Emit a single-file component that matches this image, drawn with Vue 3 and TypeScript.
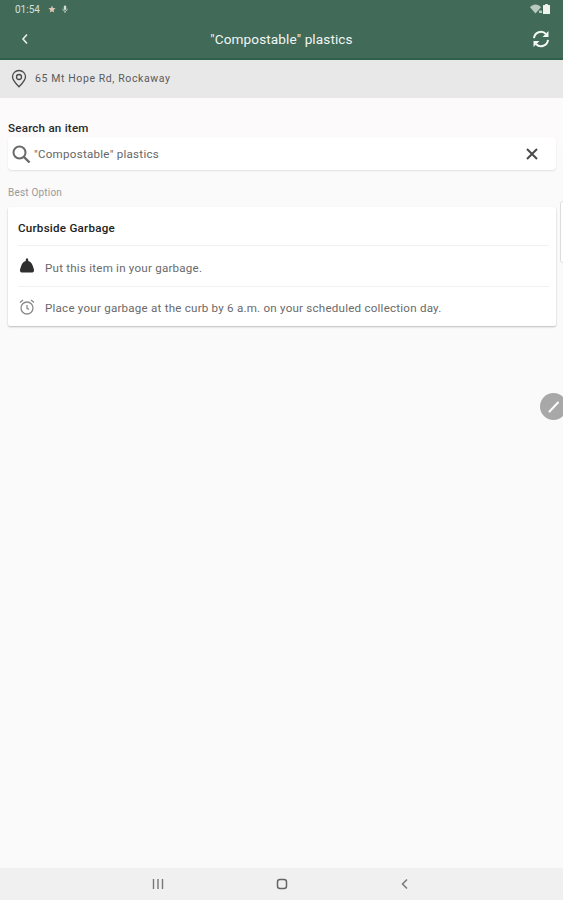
<script setup lang="ts">
const title = '"Compostable" plastics'
</script>

<template>
  <div class="page">
    <header class="appbar">
      <div class="status">
        <div class="status-left">
          <span class="time">01:54</span>
          <svg width="8" height="8" viewBox="0 0 8 8"><path d="M4 .5 5 3l2.600.3L5.600 5l.6 2.600L4 6.200 1.800 7.600 2.400 5 .4 3.300 3 3z" fill="#e0c8b4" /></svg>
          <svg width="6" height="8" viewBox="0 0 6 8"><rect x="1.800" y=".5" width="2.400" height="4.500" rx="1.200" fill="#d5e0da" /><path d="M.8 3.800C.8 7 5.200 7 5.200 3.800M3 6v2" fill="none" stroke="#d5e0da" stroke-width=".8" /></svg>
        </div>
        <div class="status-right">
          <svg width="12" height="10" viewBox="0 0 12 10"><path d="M0 3.200C3-.4 8-.4 11 3.200L5.500 9.500z" fill="#b9c9c1" /><path d="M9 6.500h3V9H9z" fill="#b9c9c1" /></svg>
          <svg width="7" height="10" viewBox="0 0 7 10"><path d="M2.200 0h2.600v1H6.500a.5.5 0 0 1 .5.500V10H0V1.500A.5.5 0 0 1 .5 1h1.700z" fill="#eef3f0" /></svg>
        </div>
      </div>
      <div class="toolbar">
        <svg class="back" width="8" height="12" viewBox="0 0 8 12"><path d="M6 1.500 2 6l4 4.500" fill="none" stroke="#e8efeb" stroke-width="1.600" /></svg>
        <h1 class="title">{{ title }}</h1>
        <svg class="refresh" width="18" height="18" viewBox="0 0 18 18">
          <path d="M2 8.200A7 7 0 0 1 14 4" fill="none" stroke="#f2f6f4" stroke-width="2" />
          <path d="M16 9.800A7 7 0 0 1 4 14" fill="none" stroke="#f2f6f4" stroke-width="2" />
          <path d="M16.500 1v6h-6zM1.500 17v-6h6z" fill="#f2f6f4" />
        </svg>
      </div>
    </header>

    <div class="address">
      <svg width="16" height="20" viewBox="0 0 16 20"><path d="M8 1.500c3.800 0 6.500 2.800 6.500 6.300 0 3.600-3.200 6.600-6.500 10-3.300-3.400-6.500-6.400-6.500-10C1.500 4.300 4.200 1.500 8 1.500z" fill="none" stroke="#4a4a4a" stroke-width="1.300" /><circle cx="8" cy="8" r="2.500" fill="none" stroke="#4a4a4a" stroke-width="1.300" /></svg>
      <span>65 Mt Hope Rd, Rockaway</span>
    </div>

    <main class="content">
      <div class="search-label">Search an item</div>
      <div class="search">
        <svg width="20" height="20" viewBox="0 0 20 20"><circle cx="8.500" cy="8.500" r="6" fill="none" stroke="#6a6a6a" stroke-width="2" /><path d="m13 13 5.500 5.500" stroke="#6a6a6a" stroke-width="2.400" /></svg>
        <span class="search-text">{{ title }}</span>
        <svg class="clear" width="14" height="14" viewBox="0 0 14 14"><path d="m2 2 10 10M12 2 2 12" stroke="#4a4a4a" stroke-width="2" /></svg>
      </div>

      <div class="best">Best Option</div>
      <section class="card">
        <div class="card-title">Curbside Garbage</div>
        <div class="row">
          <svg class="row-icon" width="18" height="18" viewBox="0 0 18 18"><path d="M8 1.500h2l.3 2.500c2.500.6 4 3 4.700 5.500.5 1.800 1 2.500 1 4 0 1.500-1 2-2.500 2h-9C3 15.500 2 15 2 13.500c0-1.500.5-2.200 1-4C3.700 7 5.200 4.600 7.700 4z" fill="#2f2f2f" /></svg>
          <span>Put this item in your garbage.</span>
        </div>
        <div class="row">
          <svg class="row-icon" width="18" height="18" viewBox="0 0 18 18"><circle cx="9" cy="10" r="6" fill="none" stroke="#8a8a8a" stroke-width="1.300" /><path d="M9 7v3.300l2 1M2 4.500 5 2M16 4.500 13 2" fill="none" stroke="#8a8a8a" stroke-width="1.300" /></svg>
          <span>Place your garbage at the curb by 6 a.m. on your scheduled collection day.</span>
        </div>
      </section>

      <div class="side-tab"></div>
      <div class="fab">
        <svg width="14" height="14" viewBox="0 0 14 14"><path d="m2.500 11.500 8.500-9" stroke="#fff" stroke-width="2" stroke-linecap="round" /></svg>
      </div>
    </main>

    <nav class="navbar">
      <svg width="12" height="12" viewBox="0 0 12 12"><path d="M1.500 1v10M6 1v10M10.500 1v10" stroke="#777" stroke-width="1.400" /></svg>
      <svg width="12" height="12" viewBox="0 0 12 12"><rect x="1.500" y="1.500" width="9" height="9" rx="2.500" fill="none" stroke="#666" stroke-width="1.500" /></svg>
      <svg width="12" height="12" viewBox="0 0 12 12"><path d="M8 1.500 3.500 6 8 10.500" fill="none" stroke="#777" stroke-width="1.500" /></svg>
    </nav>
  </div>
</template>

<style>
body {
  margin: 0;
}
</style>

<style scoped>
.page {
  width: 563px;
  height: 900px;
  display: flex;
  flex-direction: column;
  overflow: hidden;
  background: #fafafa;
  font-family: Roboto, "Liberation Sans", sans-serif;
  color: #555;
}

.appbar {
  height: 60px;
  box-sizing: border-box;
  background: #416a58;
  border-bottom: 2px solid #2f6049;
  flex-shrink: 0;
}

.status {
  height: 18px;
  padding: 0 13px 0 15px;
  display: flex;
  align-items: center;
  justify-content: space-between;
}

.status-left,
.status-right {
  display: flex;
  align-items: center;
  gap: 6px;
}

.status-right {
  gap: 1px;
}

.time {
  font-size: 10px;
  color: #d5e0da;
  margin-right: 2px;
}

.toolbar {
  height: 40px;
  padding: 1px 13px 0;
  box-sizing: border-box;
  display: grid;
  grid-template-columns: 1fr auto 1fr;
  align-items: center;
}

.back {
  margin-left: 8px;
}

.refresh {
  justify-self: end;
}

.title {
  margin: 0;
  text-align: center;
  font-size: 13.6px;
  font-weight: 400;
  color: #f2f6f4;
  letter-spacing: 0.1px;
}

.address {
  height: 38px;
  flex-shrink: 0;
  box-sizing: border-box;
  padding: 0 0 1px 11px;
  display: flex;
  align-items: center;
  gap: 8px;
  background: #e8e8e8;
  font-size: 10.5px;
  color: #5a5a5a;
  letter-spacing: 0.6px;
}

.content {
  flex: 1;
  position: relative;
  padding: 0 7px 0 8px;
  background: linear-gradient(#fdfafb, #fafafa 120px);
}

.search-label {
  margin-top: 24px;
  font-size: 11.6px;
  line-height: 13px;
  font-weight: 500;
  color: #2a2a2a;
  letter-spacing: 0.22px;
}

.search {
  margin-top: 2px;
  height: 33px;
  box-sizing: border-box;
  padding: 0 17px 0 3px;
  display: flex;
  align-items: center;
  gap: 3px;
  background: #fff;
  border-radius: 4px;
  box-shadow: 0 1px 2px rgba(0, 0, 0, 0.1);
  font-size: 11.6px;
  color: #666;
  letter-spacing: 0.25px;
}

.search-text {
  flex: 1;
}

.best {
  margin-top: 17px;
  font-size: 10px;
  line-height: 12px;
  color: #999;
  letter-spacing: 0.2px;
}

.card {
  margin-top: 8px;
  padding: 0 7px 0 10px;
  background: #fff;
  border-radius: 2px;
  box-shadow: 0 1px 2px rgba(0, 0, 0, 0.25);
}

.card-title {
  height: 38px;
  padding-top: 3px;
  box-sizing: border-box;
  display: flex;
  align-items: center;
  font-size: 11.6px;
  font-weight: 500;
  color: #222;
  letter-spacing: 0.25px;
}

.row {
  height: 41px;
  box-sizing: border-box;
  padding-top: 3px;
  display: flex;
  align-items: center;
  gap: 9px;
  border-top: 1px solid #f1f1f1;
  font-size: 11.6px;
  color: #6a6a6a;
  letter-spacing: 0.22px;
}

.row:last-child {
  height: 40px;
}

.row-icon {
  flex-shrink: 0;
  margin-top: -3px;
}

.side-tab {
  position: absolute;
  top: 103px;
  right: -5px;
  width: 6px;
  height: 60px;
  background: #fff;
  border: 1px solid #ddd;
  border-radius: 3px;
}

.fab {
  position: absolute;
  top: 295px;
  right: -4px;
  width: 27px;
  height: 27px;
  border-radius: 50%;
  background: #a8a8a8;
  display: flex;
  align-items: center;
  justify-content: center;
}

.navbar {
  height: 32px;
  flex-shrink: 0;
  display: flex;
  align-items: center;
  padding: 0 0 0 152px;
  gap: 111.500px;
  background: #f0f0f0;
}
</style>
